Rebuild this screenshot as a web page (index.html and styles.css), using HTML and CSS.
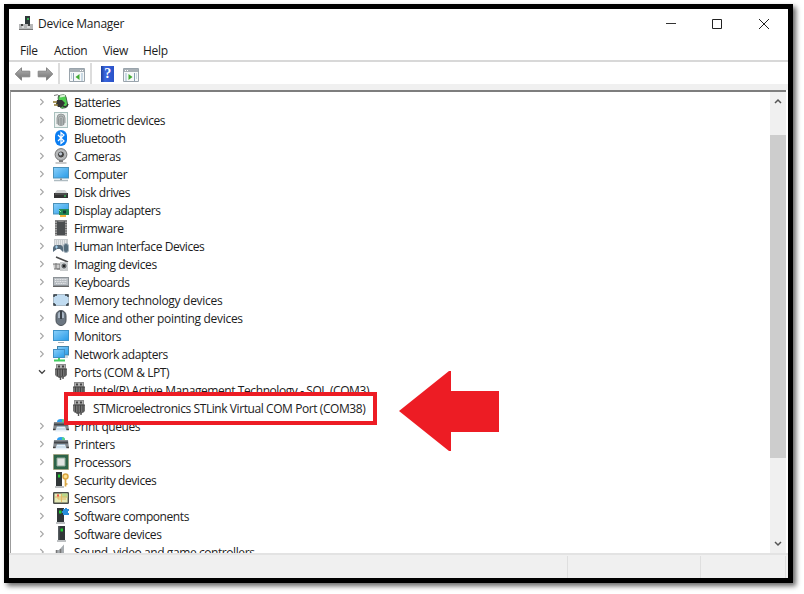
FILE: index.html
```html
<!DOCTYPE html>
<html lang="en">
<head>
<meta charset="utf-8">
<title>Device Manager</title>
<link rel="stylesheet" href="styles.css">
</head>
<body>
<svg class="defs" aria-hidden="true">
<defs>
<linearGradient id="blue" x1="0" y1="0" x2="1" y2="1"><stop offset="0" stop-color="#8bd0fa"/><stop offset="1" stop-color="#279be8"/></linearGradient>
<linearGradient id="grey" x1="0" y1="0" x2="0" y2="1"><stop offset="0" stop-color="#b4b4b4"/><stop offset="1" stop-color="#6f6f6f"/></linearGradient>
</defs>
<symbol id="chev" viewBox="0 0 6 8"><path d="M1.3 1l3 3-3 3" fill="none" stroke="#a6a6a6" stroke-width="1.1"/></symbol>
<symbol id="chevd" viewBox="0 0 8 6"><path d="M1 1.3l3 3 3-3" fill="none" stroke="#444" stroke-width="1.3"/></symbol>
<symbol id="battery" viewBox="0 0 16 16"><path d="M1 1.500q4-2 6 1" fill="none" stroke="#777"/><rect x="6" y="1" width="8" height="13" rx="3" fill="#4fcf50" stroke="#47684b" transform="rotate(-12 10 8)"/><path d="M7 2.500l5-1" stroke="#d8f2d5" stroke-width="2"/><path d="M4 6l5 0 3 3-3 4H5L3 10z" fill="#353535"/><path d="M0 8h4M1 11h4" stroke="#8d7830" stroke-width="1.5"/><path d="M9 11q4 4 6-1" fill="none" stroke="#333" stroke-width="1.500"/></symbol>
<symbol id="finger" viewBox="0 0 16 16"><rect x="1.5" y=".5" width="13" height="15" fill="#edf2f1" stroke="#a9c0bd"/><rect x="4" y="2" width="8" height="12" rx="4" fill="#b8bdbd"/><path d="M4 12V6q0-4 4-4t4 4v5M5.5 13V6.500Q5.500 4 8 4t2.500 2.500V13M7.200 14V7q0-1 .8-1t.8 1v7" fill="none" stroke="#858b8b" stroke-width=".8"/></symbol>
<symbol id="bt" viewBox="0 0 16 16"><rect x="2" y="0" width="12" height="16" rx="6" fill="#0a7df2"/><path d="M5 5l6 6-3 2.500v-11L11 5l-6 6" fill="none" stroke="#fff" stroke-width="1.200"/></symbol>
<symbol id="camera" viewBox="0 0 16 16"><path d="M6 11h4v3H6z" fill="#777"/><path d="M2.500 15h11" stroke="#b8b8b8" stroke-width="1.500"/><circle cx="8" cy="6.500" r="5.900" fill="#b5b8ba" stroke="#777"/><circle cx="8" cy="6.500" r="3.500" fill="#444" stroke="#ddd" stroke-width=".7"/><circle cx="7.500" cy="5.800" r="1.600" fill="#b9c4d0"/></symbol>
<symbol id="pc" viewBox="0 0 16 16"><rect x=".5" y="1.500" width="15" height="10.500" fill="url(#blue)" stroke="#4b91b9"/><path d="M7 12.500h2V14H7z" fill="#888"/><path d="M1 14.500h14" stroke="#aebbc1" stroke-width="1.500"/></symbol>
<symbol id="monitor" viewBox="0 0 16 16"><rect x=".5" y="2.500" width="15" height="10" fill="url(#blue)" stroke="#3d93c9"/><path d="M5 14.500h6" stroke="#9fb0ba"/></symbol>
<symbol id="disk" viewBox="0 0 16 16"><path d="M4 6h8l3 4H1z" fill="#d2d4d5"/><path d="M1 9h14v5H1z" fill="#333"/><path d="M2 10h12" stroke="#666"/><path d="M11 12h2" stroke="#40f06c"/></symbol>
<symbol id="display" viewBox="0 0 16 16"><rect x=".5" y="1.500" width="15" height="10.500" fill="url(#blue)" stroke="#4b91b9"/><path d="M6 7h10v6H6z" fill="#238956"/><path d="M10 8.500h3v3h-3z" fill="#143d35"/><path d="M7 14h6" stroke="#f4b13d" stroke-width="2"/><path d="M6 8l2 2" stroke="#8de59d"/></symbol>
<symbol id="firm" viewBox="0 0 16 16"><path d="M2 0h12v16H2z" fill="#a1a1a1"/><path d="M2 1h12M2 3.500h12M2 6h12M2 8.500h12M2 11h12M2 13.500h12" stroke="#666"/><path d="M4 1l2 1h4l2-1v14H4z" fill="#4b4e50"/></symbol>
<symbol id="hid" viewBox="0 0 16 16"><path d="M1 1h14v8H1z" fill="#c7cbce"/><path d="M2 3h12M2 5h12M2 7h12" stroke="#fff" stroke-dasharray="1 1"/><path d="M0 14q-1-8 4-7h3q4 0 3 7l-3-3H4z" fill="#566b7c"/><path d="M2 9h3M3.500 7.500v3" stroke="#a2d0ee"/><rect x="10.500" y="5.500" width="5" height="9" rx="2.500" fill="#536b7b" stroke="#a5b3bd"/></symbol>
<symbol id="imaging" viewBox="0 0 16 16"><path d="M3 1l12 5" stroke="#4b4b4b" stroke-width="1.600"/><path d="M0 8h7v5H1M3 7v6M4 13h4" stroke="#777" fill="#ccc"/><path d="M7 6h8v9H7z" fill="#c9cccd"/><circle cx="11" cy="10" r="3" fill="#676c6f" stroke="#fff" stroke-width=".5"/><circle cx="11" cy="10" r="1.200" fill="#222"/></symbol>
<symbol id="keyboard" viewBox="0 0 16 16"><path d="M0 3h16v10H0z" fill="#8c9297"/><path d="M1 4h14v7H1z" fill="#b9bec3"/><path d="M2 5.500h12M2 7.500h12M3 9.500h10" stroke="#e6e8ea" stroke-dasharray="1 .7"/><path d="M0 12.500h16" stroke="#666"/></symbol>
<symbol id="memory" viewBox="0 0 16 16"><rect x=".5" y="2.500" width="15" height="11" rx="1" fill="#c0dbf0" stroke="#a9bac7"/><path d="M1 5V3h3M12 3h3v2M1 11v2h2M13 13h2v-2" stroke="#343c42" stroke-width="1.400" fill="none"/></symbol>
<symbol id="mouse" viewBox="0 0 16 16"><rect x="3" y=".5" width="10" height="15" rx="5" fill="#6b7681" stroke="#4a5057"/><path d="M5 5q0-3 2-3v6H5M9 2q2 0 2 3v3H9" fill="#aab7c5"/><path d="M8 1v8" stroke="#292f35" stroke-width="1.500"/></symbol>
<symbol id="network" viewBox="0 0 16 16"><rect x="4.500" y=".5" width="11" height="8.500" fill="url(#blue)" stroke="#4283a9"/><rect x=".5" y="3.500" width="11" height="8" fill="url(#blue)" stroke="#438fc4"/><path d="M1 14.500h11M6 12v3" stroke="#43ce63" stroke-width="1.900"/><path d="M12 11h3" stroke="#9bb1be"/></symbol>
<symbol id="port" viewBox="0 0 16 16"><path d="M3 0h10v5H3z" fill="#8d8d8d"/><path d="M4 1h8v3H4z" fill="#b0b0b0"/><path d="M5 1.500h2v2H5zM9 1.500h2v2H9z" fill="#444"/><path d="M2 5h12v6l-2 2H4l-2-2z" fill="#747474"/><path d="M4.500 5v7M7 5v7M9.500 5v7M12 5v7" stroke="#444"/><path d="M2 5h12" stroke="#444"/><path d="M5 12.500h6v1H5z" fill="#444"/><path d="M6 13h1.500v3M10 13v2" stroke="#555" stroke-width="1.400" fill="none"/></symbol>
<symbol id="printer" viewBox="0 0 16 16"><path d="M4 4q0-3 4-3t4 3z" fill="#2d9df1"/><path d="M9 1q3 0 3 3H9z" fill="#55d48b"/><path d="M1 4h14l1 8H0z" fill="#858b90"/><path d="M1 5.500h14v2H1z" fill="#42474c"/><path d="M4 8.500h8l2 5H2z" fill="#e6f0f8"/><path d="M4 8.500h8M3 11h10" stroke="#8eb2ca" stroke-width=".6"/><path d="M0 11.500h2.500M13.500 11.500H16" stroke="#444" stroke-width="1.500"/></symbol>
<symbol id="cpu" viewBox="0 0 16 16"><path d="M.5.5h15v15H.5z" fill="#2d6449" stroke="#a59562" stroke-dasharray="1 1"/><path d="M4 4h8v8H4z" fill="#e1e4e2" stroke="#91aa9b"/></symbol>
<symbol id="tower" viewBox="0 0 16 16"><path d="M5 0h7v14H5z" fill="#303638"/><path d="M5 0h1.500v14H5z" fill="#565d60"/><path d="M7.500 2.500H10v3H7.500z" fill="#22ce35"/><path d="M4 15h9" stroke="#a8adaf" stroke-width="1.500"/></symbol>
<symbol id="security" viewBox="0 0 16 16"><path d="M3 0h6v14H3z" fill="#303638"/><path d="M5 2.500h2.200v3H5z" fill="#22ce35"/><path d="M2 15h9" stroke="#a8adaf" stroke-width="1.500"/><circle cx="12.500" cy="4.500" r="2.500" fill="#ffe190" stroke="#dba743" stroke-width="1.500"/><path d="M12.500 7v7.500M12.500 12h2" stroke="#dba743" stroke-width="1.700"/></symbol>
<symbol id="sensor" viewBox="0 0 16 16"><rect x=".7" y="2.700" width="14.600" height="10.600" rx=".5" fill="#e5eab6" stroke="#494d49" stroke-width="1.400"/><path d="M9 3.500h5.500v4H9z" fill="#b8d88a"/><path d="M5 4v5h8M2 7h12M8.500 4v8" fill="none" stroke="#e4b866"/><path d="M4 4.500h2v2H4z" fill="#ed5950"/></symbol>
<symbol id="software" viewBox="0 0 16 16"><path d="M4 0h7v14H4z" fill="#303638"/><path d="M6 2.500h2.500v3H6z" fill="#22ce35"/><path d="M3 15h9" stroke="#a8adaf" stroke-width="1.500"/><path d="M10 1h2V0h2v1h2v2h-1v2h1v2h-6V5H9V3h1z" fill="#278dda"/></symbol>
<symbol id="sound" viewBox="0 0 16 16"><path d="M3 6h3l5-5.500v15L6 12H3z" fill="#a8adb1"/><path d="M7.500 5v9M3.500 6v7" stroke="#777" stroke-width="1.500"/></symbol>
<symbol id="arrow" viewBox="0 0 16 14"><path d="M.7 7L7 .8v3.400h8.300v5.600H7v3.400z" fill="url(#grey)" stroke="#858585"/></symbol>
<symbol id="pane" viewBox="0 0 16 14"><path d="M.5.500h15v13H.5z" fill="#f6f8f9" stroke="#9aa4ac"/><path d="M1 1h14v3H1z" fill="#a8b0b6"/><path d="M11 2.500h1M13 2.500h1" stroke="#fff"/><path d="M4.500 5v8" stroke="#879fb1"/><path d="M2 6h1M2 8h1M2 10h1M13 5v8" stroke="#9cb9ce"/><path d="M10.500 6v6l-4-3z" fill="#43ac35"/></symbol>
</svg>
<main class="window">
<header class="title"><svg class="app" viewBox="0 0 14 15"><path d="M6 0h5v9H6z" fill="#30383a"/><path d="M8 2h2v2H8z" fill="#36ad55"/><path d="M0 8h14v6H0z" fill="#b6b7b8"/><path d="M0 13.500h14" stroke="#777"/><path d="M2 8v2h2V8M9 8v2h2V8" fill="#444"/><path d="M3 11h2M8 11h3" stroke="#fff"/></svg><h1>Device Manager</h1>
<svg class="controls" viewBox="0 0 104 12"><path d="M0 5.500h10" stroke="#333"/><path d="M46.500 1.500h9v9h-9z" fill="none" stroke="#222"/><path d="M93 1l10 10M103 1L93 11" stroke="#222" fill="none"/></svg></header>
<nav><span class="m1">File</span><span class="m2">Action</span><span class="m3">View</span><span>Help</span></nav>
<div class="toolbar"><svg class="back"><use href="#arrow"/></svg><svg class="forward"><use href="#arrow"/></svg><i class="sep"></i><svg class="pane"><use href="#pane"/></svg><i class="sep"></i><b class="help">?</b><svg class="pane flip"><use href="#pane"/></svg></div>
<div class="content">
<ul class="tree">
<li><svg class="c"><use href="#chev"/></svg><svg class="i"><use href="#battery"/></svg><span>Batteries</span></li>
<li><svg class="c"><use href="#chev"/></svg><svg class="i"><use href="#finger"/></svg><span>Biometric devices</span></li>
<li><svg class="c"><use href="#chev"/></svg><svg class="i"><use href="#bt"/></svg><span>Bluetooth</span></li>
<li><svg class="c"><use href="#chev"/></svg><svg class="i"><use href="#camera"/></svg><span>Cameras</span></li>
<li><svg class="c"><use href="#chev"/></svg><svg class="i"><use href="#pc"/></svg><span>Computer</span></li>
<li><svg class="c"><use href="#chev"/></svg><svg class="i"><use href="#disk"/></svg><span>Disk drives</span></li>
<li><svg class="c"><use href="#chev"/></svg><svg class="i"><use href="#display"/></svg><span>Display adapters</span></li>
<li><svg class="c"><use href="#chev"/></svg><svg class="i"><use href="#firm"/></svg><span>Firmware</span></li>
<li><svg class="c"><use href="#chev"/></svg><svg class="i"><use href="#hid"/></svg><span>Human Interface Devices</span></li>
<li><svg class="c"><use href="#chev"/></svg><svg class="i"><use href="#imaging"/></svg><span>Imaging devices</span></li>
<li><svg class="c"><use href="#chev"/></svg><svg class="i"><use href="#keyboard"/></svg><span>Keyboards</span></li>
<li class="loose"><svg class="c"><use href="#chev"/></svg><svg class="i"><use href="#memory"/></svg><span>Memory technology devices</span></li>
<li class="loose"><svg class="c"><use href="#chev"/></svg><svg class="i"><use href="#mouse"/></svg><span>Mice and other pointing devices</span></li>
<li><svg class="c"><use href="#chev"/></svg><svg class="i"><use href="#monitor"/></svg><span>Monitors</span></li>
<li><svg class="c"><use href="#chev"/></svg><svg class="i"><use href="#network"/></svg><span>Network adapters</span></li>
<li><svg class="c"><use href="#chevd"/></svg><svg class="i"><use href="#port"/></svg><span>Ports (COM &amp; LPT)</span></li>
<li class="child"><svg class="i"><use href="#port"/></svg><span>Intel(R) Active Management Technology - SOL (COM3)</span></li>
<li class="child marked"><svg class="i"><use href="#port"/></svg><span>STMicroelectronics STLink Virtual COM Port (COM38)</span>
<svg class="pointer" viewBox="0 0 100 80"><path d="M0 40L50 0h2v20h48v41H52v19h-2z" fill="#ed1c24"/></svg></li>
<li><svg class="c"><use href="#chev"/></svg><svg class="i"><use href="#printer"/></svg><span>Print queues</span></li>
<li><svg class="c"><use href="#chev"/></svg><svg class="i"><use href="#printer"/></svg><span>Printers</span></li>
<li><svg class="c"><use href="#chev"/></svg><svg class="i"><use href="#cpu"/></svg><span>Processors</span></li>
<li><svg class="c"><use href="#chev"/></svg><svg class="i"><use href="#security"/></svg><span>Security devices</span></li>
<li><svg class="c"><use href="#chev"/></svg><svg class="i"><use href="#sensor"/></svg><span>Sensors</span></li>
<li><svg class="c"><use href="#chev"/></svg><svg class="i"><use href="#software"/></svg><span>Software components</span></li>
<li><svg class="c"><use href="#chev"/></svg><svg class="i"><use href="#tower"/></svg><span>Software devices</span></li>
<li><svg class="c"><use href="#chev"/></svg><svg class="i"><use href="#sound"/></svg><span>Sound, video and game controllers</span></li>
</ul>
<div class="scroll"><svg viewBox="0 0 8 6"><path d="M1 5l3-3 3 3" fill="none" stroke="#555" stroke-width="1.500"/></svg><i></i><svg viewBox="0 0 8 6"><path d="M1 1l3 3 3-3" fill="none" stroke="#555" stroke-width="1.500"/></svg></div>
</div>
<footer><i></i><i></i><i></i></footer>
</main>
</body>
</html>
```
FILE: styles.css
```css
*, *::before { box-sizing: border-box; }
body { margin: 0; padding: 4px; width: 804px; height: 594px; overflow: hidden; background: #fff; font: 12px/18px "Open Sans", "Noto Sans", sans-serif; letter-spacing: -.42px; color: #1c1c1c; }
.defs { position: absolute; width: 0; height: 0; }
svg { display: block; flex: none; }
.window { width: 789px; height: 579px; border: 5px solid #000; display: flex; flex-direction: column; background: #fff; box-shadow: 3px 3px 5px rgba(0,0,0,.6); }
.title { height: 29px; display: flex; align-items: center; padding: 0 18px 0 10px; }
.app { width: 14px; height: 15px; margin-right: 5px; }
h1 { margin: 0; font-size: 12px; font-weight: 400; flex: 1; letter-spacing: -.25px; }
.controls { width: 104px; height: 12px; }
nav { height: 24px; display: flex; padding: 3px 0 0 11px; line-height: 19px; letter-spacing: -.3px; border-bottom: 2px solid #d8d8d8; }
nav span { width: 40px; }
nav .m1 { width: 34px; }
nav .m2 { width: 49px; }
.toolbar { height: 28px; display: flex; align-items: flex-start; padding: 4px 0 0 5px; border-bottom: 6px solid #f0f0f0; }
.toolbar svg { width: 17px; height: 14px; margin-top: 1px; }
.toolbar .forward { margin-left: 6px; transform: scaleX(-1); }
.sep { width: 2px; height: 21px; background: #dcdcdc; margin-top: -3px; margin-left: 4px; }
.toolbar .pane { margin: 2px 0 0 9px; width: 16px; }
.toolbar .pane + .sep { margin-left: 5px; }
.help { width: 13px; height: 16px; margin-left: 9px; background: linear-gradient(90deg, #1c3f9d, #3a66dd 30%, #2952c8); color: #fff; font: 700 14px/16px "Liberation Serif", serif; text-align: center; }
.toolbar .flip { transform: scaleX(-1); }
.content { height: 463px; margin: 0 2px 0 1px; border-top: 2px solid #7e7e7e; border-left: 1px solid #9c9c9c; display: flex; overflow: hidden; }
.tree { list-style: none; margin: 0; padding: 1px 0 0; flex: 1; height: 461px; overflow: hidden; }
li { height: 18px; display: flex; align-items: center; padding-left: 27px; white-space: nowrap; }
li span { padding-top: 1px; }
.loose { letter-spacing: -.3px; }
.c { width: 8px; height: 8px; margin-right: 7px; }
.i { width: 16px; height: 16px; margin-right: 5px; }
.child { padding-left: 60px; }
.child .i { margin-right: 6px; }
.marked { position: relative; z-index: 1; }
.marked::before { content: ""; position: absolute; z-index: -1; left: 53px; top: -7px; width: 313px; height: 33px; border: 4px solid #ed1c24; background: #fff; }
.pointer { position: absolute; left: 388px; top: -28px; width: 100px; height: 80px; }
.scroll { width: 16px; background: #f0f0f0; display: flex; flex-direction: column; align-items: center; padding: 6px 0 6px; }
.scroll svg { width: 8px; height: 6px; }
.scroll i { width: 16px; height: 323px; background: #cdcdcd; margin: 31px 0 auto; }
footer { flex: 1; border-top: 2px solid #e3e3e3; background: #f0f0f0; display: flex; padding-top: 1px; }
footer i { border-right: 1px solid #dfdfdf; width: 559px; }
footer i + i { width: 133px; }
footer i + i + i { width: 85px; }
```
